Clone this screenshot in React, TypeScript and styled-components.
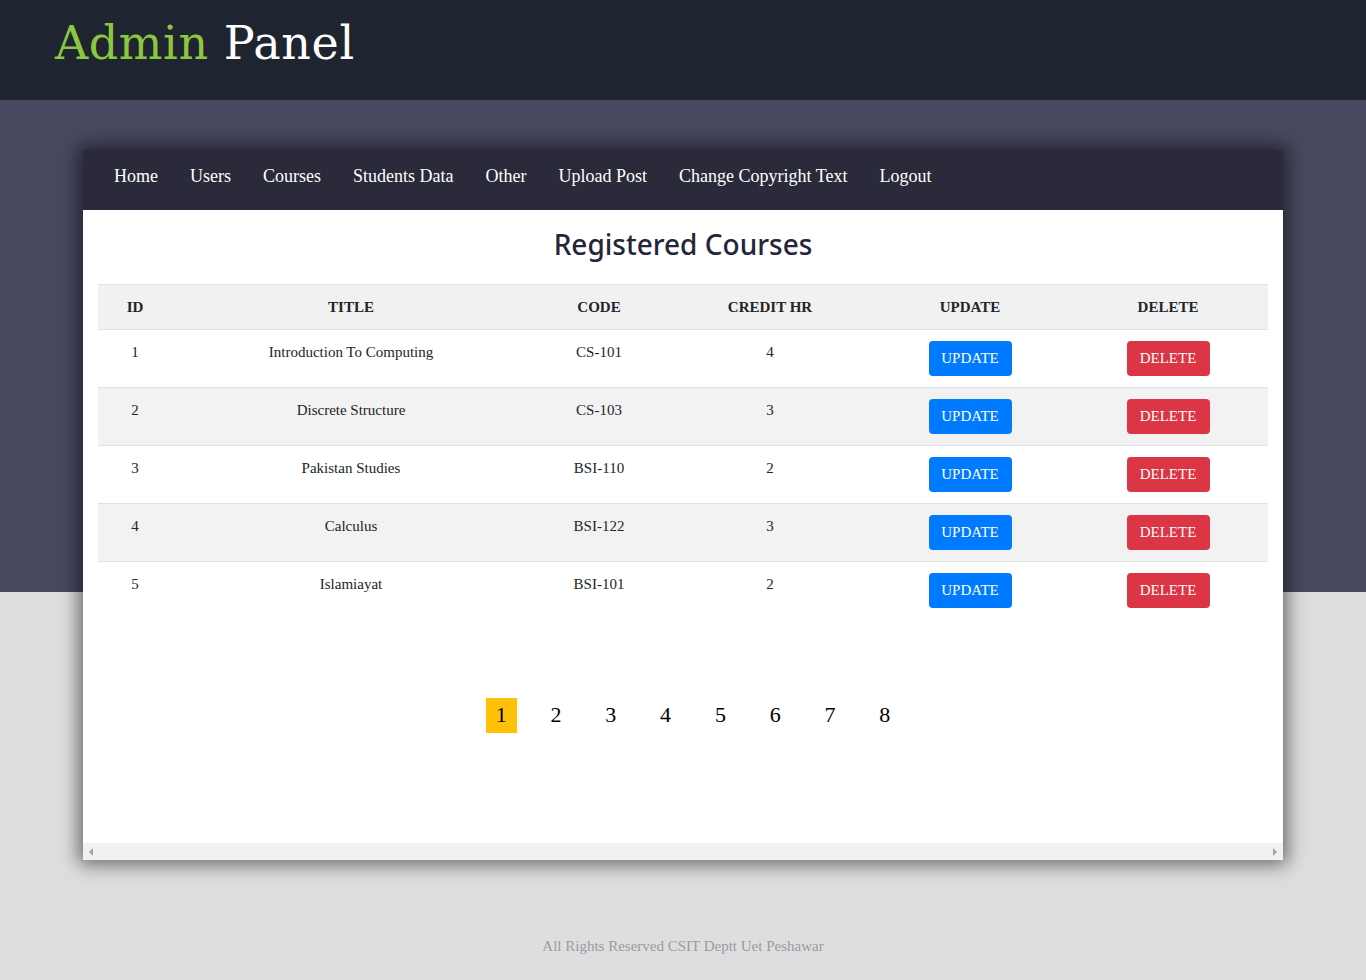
import React from "react";
import styled, { createGlobalStyle } from "styled-components";

const Global = createGlobalStyle`
  html, body { margin: 0; padding: 0; }
  body { background: #dedede; font-family: "Liberation Serif", "Times New Roman", serif; }
`;

const Page = styled.div`
  min-height: 980px;
  background: linear-gradient(to bottom, #484860 0, #484860 592px, #dedede 592px);
  display: flex;
  flex-direction: column;
`;

const Header = styled.header`
  height: 100px;
  background: #1e2530;
  display: flex;
  align-items: center;
  padding-left: 55px;
  box-sizing: border-box;
`;

const Logo = styled.h1`
  margin: 0 0 14px 0;
  font-family: "DejaVu Serif", serif;
  font-weight: normal;
  font-size: 46px;
  letter-spacing: 0.6px;
  color: #fff;
`;

const Green = styled.span`
  color: #8dc63f;
`;

const Main = styled.main`
  padding: 50px 83px 0;
`;

const Card = styled.div`
  background: #fff;
  box-shadow: 0 0 18px 4px rgba(0, 0, 0, 0.55);
`;

const Nav = styled.nav`
  height: 60px;
  box-sizing: border-box;
  padding-bottom: 8px;
  background: #2a2a3a;
  display: flex;
  align-items: center;
  padding-left: 31px;
  gap: 32px;
`;

const NavLink = styled.a`
  color: #fff;
  font-size: 18px;
  text-decoration: none;
  font-family: "Liberation Serif", serif;
`;

const Content = styled.div`
  padding: 0 15px;
  height: 633px;
  box-sizing: border-box;
  display: flex;
  flex-direction: column;
`;

const Title = styled.h2`
  margin: 0;
  height: 74px;
  box-sizing: border-box;
  padding-bottom: 6px;
  display: flex;
  align-items: center;
  justify-content: center;
  font-family: "Noto Sans", "Open Sans", sans-serif;
  font-weight: 500;
  font-size: 28px;
  color: #25253a;
`;

const Table = styled.table`
  width: 100%;
  border-collapse: collapse;
  table-layout: fixed;
  font-family: "Liberation Serif", serif;
  color: #212529;
`;

const Th = styled.th<{ $w: number }>`
  width: ${(p) => p.$w}px;
  height: 45px;
  box-sizing: border-box;
  padding: 1px 12px 0;
  background: #f1f1f1;
  border-top: 1px solid #dee2e6;
  font-size: 15px;
  font-weight: bold;
  text-align: center;
  vertical-align: middle;
`;

const Tr = styled.tr<{ $striped: boolean }>`
  background: ${(p) => (p.$striped ? "#f2f2f2" : "#fff")};
  border-top: 1px solid #dee2e6;
`;

const Td = styled.td`
  height: 58px;
  box-sizing: border-box;
  padding: 11px 12px 0;
  font-size: 15px;
  line-height: 23px;
  text-align: center;
  vertical-align: top;
`;

const Btn = styled.button<{ $kind: "update" | "delete" }>`
  width: 83px;
  height: 35px;
  border: none;
  border-radius: 4px;
  background: ${(p) => (p.$kind === "update" ? "#007bff" : "#dc3545")};
  color: #fff;
  font-family: "Liberation Serif", serif;
  font-size: 15px;
  cursor: pointer;
  padding: 0 0 1px;
`;

const Pager = styled.div`
  margin-top: 78px;
  display: flex;
  justify-content: center;
  padding-left: 20px;
  gap: 23.8px;
`;

const PageNum = styled.a<{ $active?: boolean }>`
  width: 31px;
  height: 35px;
  display: flex;
  align-items: center;
  justify-content: center;
  font-size: 22px;
  color: #000;
  background: ${(p) => (p.$active ? "#ffc107" : "transparent")};
`;

const Scrollbar = styled.div`
  height: 17px;
  background: #f1f1f1;
  display: flex;
  align-items: center;
  justify-content: space-between;
  padding: 0 6px;
`;

const Arrow = styled.span<{ $dir: "left" | "right" }>`
  width: 0;
  height: 0;
  border-top: 4px solid transparent;
  border-bottom: 4px solid transparent;
  ${(p) =>
    p.$dir === "left"
      ? "border-right: 4px solid #a3a3a3;"
      : "border-left: 4px solid #a3a3a3;"}
`;

const Footer = styled.footer`
  margin-top: 78px;
  text-align: center;
  font-size: 15px;
  color: #9a9aa6;
`;

const courses = [
  [1, "Introduction To Computing", "CS-101", 4],
  [2, "Discrete Structure", "CS-103", 3],
  [3, "Pakistan Studies", "BSI-110", 2],
  [4, "Calculus", "BSI-122", 3],
  [5, "Islamiayat", "BSI-101", 2],
] as const;

const cols: [string, number][] = [
  ["ID", 74],
  ["TITLE", 358],
  ["CODE", 138],
  ["CREDIT HR", 204],
  ["UPDATE", 196],
  ["DELETE", 200],
];

const links = ["Home", "Users", "Courses", "Students Data", "Other", "Upload Post", "Change Copyright Text", "Logout"];

export default function App() {
  return (
    <>
      <Global />
      <Page>
        <Header>
          <Logo>
            <Green>Admin</Green> Panel
          </Logo>
        </Header>
        <Main>
          <Card>
            <Nav>
              {links.map((l) => (
                <NavLink key={l} href="#">
                  {l}
                </NavLink>
              ))}
            </Nav>
            <Content>
              <Title>Registered Courses</Title>
              <Table>
                <thead>
                  <tr>
                    {cols.map(([c, w]) => (
                      <Th key={c} $w={w}>
                        {c}
                      </Th>
                    ))}
                  </tr>
                </thead>
                <tbody>
                  {courses.map(([id, title, code, cr], i) => (
                    <Tr key={id} $striped={i % 2 === 1}>
                      <Td>{id}</Td>
                      <Td>{title}</Td>
                      <Td>{code}</Td>
                      <Td>{cr}</Td>
                      <Td>
                        <Btn $kind="update">UPDATE</Btn>
                      </Td>
                      <Td>
                        <Btn $kind="delete">DELETE</Btn>
                      </Td>
                    </Tr>
                  ))}
                </tbody>
              </Table>
              <Pager>
                {[1, 2, 3, 4, 5, 6, 7, 8].map((n) => (
                  <PageNum key={n} $active={n === 1}>
                    {n}
                  </PageNum>
                ))}
              </Pager>
            </Content>
            <Scrollbar>
              <Arrow $dir="left" />
              <Arrow $dir="right" />
            </Scrollbar>
          </Card>
        </Main>
        <Footer>All Rights Reserved CSIT Deptt Uet Peshawar</Footer>
      </Page>
    </>
  );
}
